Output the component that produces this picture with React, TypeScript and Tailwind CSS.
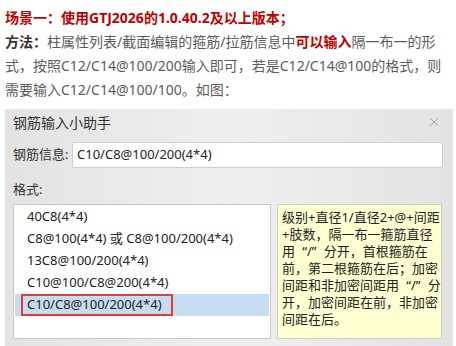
import { X } from 'lucide-react';

const items = [
  '40C8(4*4)',
  'C8@100(4*4) 或 C8@100/200(4*4)',
  '13C8@100/200(4*4)',
  'C10@100/C8@200(4*4)',
];

function Slash() {
  return (
    <>
      <span className="inline-block w-[12px] text-right">“</span>/
      <span className="inline-block w-[12px] text-left">”</span>
    </>
  );
}

export default function App() {
  return (
    <div
      className="w-[456px] h-[346px] bg-white overflow-hidden flex flex-col"
      style={{ fontFamily: '"Noto Sans", "Noto Sans CJK SC", sans-serif' }}
    >
      {/* article text */}
      <div className="px-[5px] pt-[6px] text-[14px] leading-[24px] text-[#5c5c5c] whitespace-nowrap">
        <div className="font-bold text-[#c00000]">场景一：使用GTJ2026的1.0.40.2及以上版本；</div>
        <div>
          <span className="font-bold text-[#333]">方法：</span>柱属性列表/截面编辑的箍筋/拉筋信息中
          <span className="font-bold text-[#c00000]">可以输入</span>隔一布一的形
        </div>
        <div>式，按照C12/C14@100/200输入即可，若是C12/C14@100的格式，则</div>
        <div>需要输入C12/C14@100/100。如图：</div>
      </div>

      {/* dialog */}
      <div className="mt-[7px] ml-[5px] w-[448px] flex-1 bg-gradient-to-r from-[#e3e3e3] via-[#efefef] to-[#e3e3e3] px-[8px] text-[#333]">
        <div className="h-[26px] flex items-center justify-between text-[14px]">
          <span>钢筋输入小助手</span>
          <X className="w-[14px] h-[14px] text-[#888] mr-[4px]" strokeWidth={1.2} />
        </div>

        <div className="mt-[7px] h-[26px] flex items-center text-[13px]">
          <span className="w-[59px]">钢筋信息:</span>
          <div className="flex-1 mr-[2px] h-[26px] bg-white border border-[#cfcfcf] rounded-[2px] flex items-center pl-[4px] text-[13px] text-[#222]">
            C10/C8@100/200(4*4)
          </div>
        </div>

        <div className="mt-[12px] h-[20px] flex items-center text-[13px]">格式:</div>

        <div className="mt-[4px] flex gap-[6px]">
          <div className="w-[258px] h-[135px] bg-white border border-[#c9c9c9] pt-[1px] px-[1px] text-[13px] text-[#222]">
            {items.map((t) => (
              <div key={t} className="h-[22px] flex items-center pl-[12px] whitespace-nowrap">
                {t}
              </div>
            ))}
            <div className="h-[22px] flex items-center bg-[#c6dcf1] pl-[6px]">
              <span className="w-[152px] h-[22px] border-2 border-[#e5393b] flex items-center pl-[4px] whitespace-nowrap">
                C10/C8@100/200(4*4)
              </span>
            </div>
          </div>

          <div className="w-[165px] h-[135px] bg-[#ffffd2] border border-[#cfcfbe] pt-[4px] pl-[4px] text-[13px] leading-[17px] text-[#222] whitespace-nowrap overflow-hidden">
            <div>级别+直径1/直径2+@+间距</div>
            <div>+肢数，隔一布一箍筋直径</div>
            <div>
              用<Slash />分开，首根箍筋在
            </div>
            <div>前，第二根箍筋在后；加密</div>
            <div>
              间距和非加密间距用<Slash />分
            </div>
            <div>开，加密间距在前，非加密</div>
            <div>间距在后。</div>
          </div>
        </div>
      </div>
    </div>
  );
}
